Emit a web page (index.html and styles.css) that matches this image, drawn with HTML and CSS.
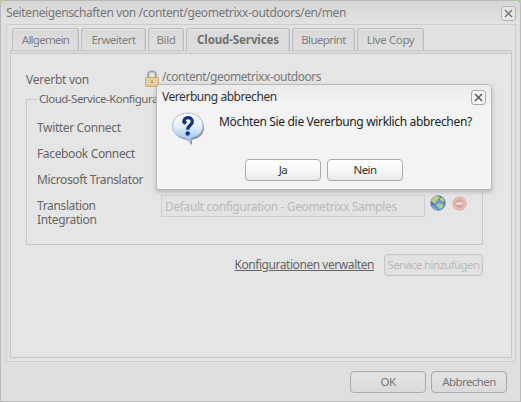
FILE: index.html
```
<!DOCTYPE html>
<html lang="de">
<head>
<meta charset="utf-8">
<title>Seiteneigenschaften</title>
<link rel="stylesheet" href="styles.css">
</head>
<body>
<main class="window">
  <header class="titlebar">
    <span class="title">Seiteneigenschaften von /content/geometrixx-outdoors/en/men</span>
    <button class="close" aria-label="Schließen"><svg viewBox="0 0 13 13"><path d="M3 3l7 7M10 3l-7 7"/></svg></button>
  </header>
  <section class="body">
    <nav class="tabs">
      <span class="tab general">Allgemein</span>
      <span class="tab advanced">Erweitert</span>
      <span class="tab image">Bild</span>
      <span class="tab cloud active">Cloud-Services</span>
      <span class="tab blueprint">Blueprint</span>
      <span class="tab live">Live Copy</span>
    </nav>
    <div class="panel">
      <div class="inherit">
        <span class="inherit-label">Vererbt von</span>
        <svg class="lock" viewBox="0 0 14 17"><path d="M3 9V5.500C3 0 11 0 11 5.500V9" fill="none" stroke="#a5a5a2" stroke-width="2.200"/><path d="M4 7V5.500C4 1 9.500 1 10 5" fill="none" stroke="#c8c8c6" stroke-width=".6"/><rect x=".5" y="7.500" width="13" height="9" rx=".8" fill="#e5c995" stroke="#cfaa72"/><path d="M2 9.500h10M2 11.500h10M2 13.500h10" stroke="#edd9af" stroke-width=".8"/><path d="M7 10.500v2.500" stroke="#a98c58" stroke-width="1.600"/></svg>
        <span class="path">/content/geometrixx-outdoors</span>
      </div>
      <fieldset class="services">
        <legend>Cloud-Service-Konfigura</legend>
        <div class="row">Twitter Connect</div>
        <div class="row">Facebook Connect</div>
        <div class="row">Microsoft Translator</div>
        <div class="row translation">
          <span class="label">Translation<br>Integration</span>
          <span class="field">Default configuration - Geometrixx Samples</span>
          <svg class="globe" viewBox="0 0 16 16"><defs><radialGradient id="sea" cx=".6" cy=".65"><stop stop-color="#83b6dc"/><stop offset="1" stop-color="#5279ae"/></radialGradient></defs><circle cx="8" cy="8" r="7.300" fill="url(#sea)" stroke="#6483aa" stroke-width=".8"/><path d="M2 4L5 1l4 .4 1 1.700-2 1-.5 2-2 .5 1 1.200-2 .7L1 6zM10 3l3-.2 1.500 3-2 .8-2.200-1.300zM7.500 9l3-.4 2.800 1.700-.8 2.400-2.800 1-1-2.200-2-.8z" fill="#bacf7f"/><path d="M2.500 11q1 2.600 4 3.300" fill="none" stroke="#abcde2"/></svg>
          <svg class="remove" viewBox="0 0 14 14"><circle cx="7" cy="7" r="6.300" fill="#e3b5b1" stroke="#dfaeaa" stroke-width=".8"/><circle cx="7" cy="7" r="4.600" fill="#dda29d" stroke="#e9c9c6" stroke-width=".8"/><path d="M4 7h6" stroke="#f2e6e4" stroke-width="2"/></svg>
        </div>
      </fieldset>
      <div class="actions">
        <a class="manage">Konfigurationen verwalten</a>
        <button class="button disabled">Service hinzufügen</button>
      </div>
    </div>
  </section>
  <footer class="footer">
    <button class="button">OK</button>
    <button class="button">Abbrechen</button>
  </footer>
</main>
<section class="modal" role="dialog">
  <header class="modal-head">
    <span class="modal-title">Vererbung abbrechen</span>
    <button class="close" aria-label="Schließen"><svg viewBox="0 0 13 13"><path d="M3 3l7 7M10 3l-7 7"/></svg></button>
  </header>
  <div class="message">
    <svg class="question" viewBox="0 0 34 34"><defs><linearGradient id="bubble" x1="0" y1="0" x2="0" y2="1"><stop stop-color="#fff"/><stop offset=".45" stop-color="#e3effb"/><stop offset="1" stop-color="#83b9f0"/></linearGradient></defs><path d="M17 2C7.500 2 2 7.800 2 14.800c0 6.200 4.500 10.600 11.800 11.800 3 .5 4.200 3 5.700 5.400.8-1.500.4-3.700.9-5.400C27.500 25.300 32 21 32 14.800 32 7.500 26.500 2 17 2z" transform="translate(.9 1)" fill="#555" opacity=".7"/><path d="M17 1C7.500 1 1.500 7 1.500 14c0 6.500 4.500 11 12 12 3 .5 4.200 3 6 5.500.7-1.500.2-3.800.8-5.500C27.500 24.500 32 20.500 32 14 32 7 26.500 1 17 1z" fill="url(#bubble)" stroke="#a7b6ca" stroke-width=".9"/><path d="M13 10.500C12 4.200 21.300 4 21.300 9.700c0 3.600-4.600 3.800-4.600 8" fill="none" stroke="#11358a" stroke-width="3.300"/><circle cx="13.600" cy="10.300" r="2.100" fill="#11358a"/><circle cx="16.700" cy="21.500" r="2.200" fill="#11358a"/></svg>
    <span class="prompt">Möchten Sie die Vererbung wirklich abbrechen?</span>
  </div>
  <div class="modal-actions">
    <button class="button">Ja</button>
    <button class="button">Nein</button>
  </div>
</section>
</body>
</html>
```
FILE: styles.css
```
* { box-sizing: border-box; }
body {
  margin: 0; width: 521px; height: 402px; overflow: hidden; background: #b8cda0;
  font: 12px/14px "Noto Sans", sans-serif; letter-spacing: -.36px; color: #666;
}
button { font: inherit; letter-spacing: inherit; color: inherit; padding: 0; margin: 0; }
.window {
  width: 521px; height: 402px; padding: 0 5px; border: 1px solid #bababa; border-bottom-color: #bdbdbd;
  border-radius: 5px 5px 0 0; background: #dfdfdf;
}
.titlebar {
  height: 23px; display: flex; justify-content: space-between; align-items: center;
  margin: 0 -5px; padding: 1px 4px 0 5px;
  background: linear-gradient(#d6d6d6, #e2e2e2); border-radius: 4px 4px 0 0;
}
.title, .tab, .inherit span, legend, .row, .manage, .button, .modal-title, .prompt { white-space: nowrap; }
.title { color: #777; letter-spacing: -.38px; }
.close { width: 15px; height: 15px; border: 1px solid #b5b5b5; border-radius: 3px; background: #e7e7e7; }
.close svg { display: block; width: 13px; height: 13px; fill: none; stroke: #777; stroke-width: 1.5; }
.body { width: 510px; height: 338px; border: 1px solid #cdcdcd; padding: 3px; background: #e2e2e2; }
.tabs { display: flex; height: 22px; padding-left: 2px; }
.tab {
  height: 22px; text-align: center; font-size: 11.5px; line-height: 21px; border: 1px solid #bcbcbc; border-bottom: 0;
  border-radius: 3px 3px 0 0; background: linear-gradient(#d9d9d9, #dfdfdf); color: #808080;
  box-shadow: inset 0 1px #e7e7e7, inset -1px 0 #d2d2d2; margin-right: 2px;
}
.general { width: 67px; letter-spacing: -.75px; }
.advanced { width: 65px; letter-spacing: -.55px; }
.image { width: 36px; }
.cloud { width: 104px; letter-spacing: -.1px; }
.blueprint { width: 63px; letter-spacing: -.6px; }
.live { width: 67px; letter-spacing: -.4px; }
.tab.active { position: relative; height: 23px; color: #707070; font-weight: bold; background: #dcdcdc; }
.panel {
  width: 502px; height: 308px; border: 1px solid #c9c9c9; background: #e5e5e5;
  box-shadow: inset 0 2px #dadada, inset 0 3px #cbcbcb; padding: 19px 15px 0;
}
.inherit { display: flex; height: 18px; }
.inherit-label { width: 119px; padding: 3px 0 0; letter-spacing: -.25px; }
.lock { width: 14px; height: 17px; }
.path { margin-left: 3px; color: #777; letter-spacing: -.47px; }
.services { display: block; margin: 4px 0 0; padding: 15px 10px 0; width: 457px; height: 153px; border: 1px solid #cacaca; min-width: 0; }
legend { padding: 0 2px; font-size: 11.5px; letter-spacing: -.5px; }
.row { height: 26px; }
.row.translation { display: flex; height: 32px; }
.label { width: 124px; }
.field { width: 264px; height: 22px; margin-top: -4px; border: 1px solid #cfcfcf; padding: 4px 3px; background: #e3e3e3; color: #bababa; flex: none; }
.globe { width: 16px; height: 16px; margin: -4px 0 0 5px; flex: none; }
.remove { width: 15px; height: 15px; margin: -3px 0 0 6px; flex: none; }
.actions { display: flex; width: 457px; justify-content: flex-end; align-items: center; gap: 10px; margin-top: 9px; }
.manage { text-decoration: underline; letter-spacing: -.44px; }
.button {
  width: 76px; height: 22px; border: 1px solid #ababab; border-radius: 4px; text-align: center; color: #777;
  font-size: 11.5px; letter-spacing: -.6px; background: linear-gradient(#e4e4e4, #dadada); box-shadow: inset 0 0 0 1px #dcdcdc;
}
.button.disabled { width: 99px; border-color: #c6c6c6; color: #bababa; background: #e2e2e2; }
.footer { display: flex; justify-content: flex-end; gap: 5px; padding: 9px 8px 0 0; }
.modal {
  position: absolute; left: 156px; top: 84px; width: 336px; height: 106px;
  border: 1px solid #bababa; border-radius: 5px 5px 2px 2px; background: #f3f3f3; color: #222;
  box-shadow: 0 2px 4px #7777; padding: 0 5px;
}
.modal::before { content: ""; position: absolute; inset: 0 0 auto; height: 18px; background: linear-gradient(#ebebeb, #f3f3f3); border-radius: 4px 4px 0 0; }
.modal-head { position: relative; height: 24px; display: flex; justify-content: space-between; align-items: center; }
.modal-title { color: #333; letter-spacing: -.45px; }
.modal .close { border-color: #aaa; background: #fbfbfb; }
.modal .close svg { stroke: #555; }
.message { display: flex; height: 50px; padding: 3px 0 0 9px; }
.question { width: 34px; height: 34px; }
.prompt { margin: 3px 0 0 14px; letter-spacing: -.33px; }
.modal-actions { display: flex; gap: 6px; padding-left: 83px; }
.modal .button { color: #333; border-color: #aaa; background: linear-gradient(#fff, #f6f6f6 60%, #e8e8e8); box-shadow: none; }
```
